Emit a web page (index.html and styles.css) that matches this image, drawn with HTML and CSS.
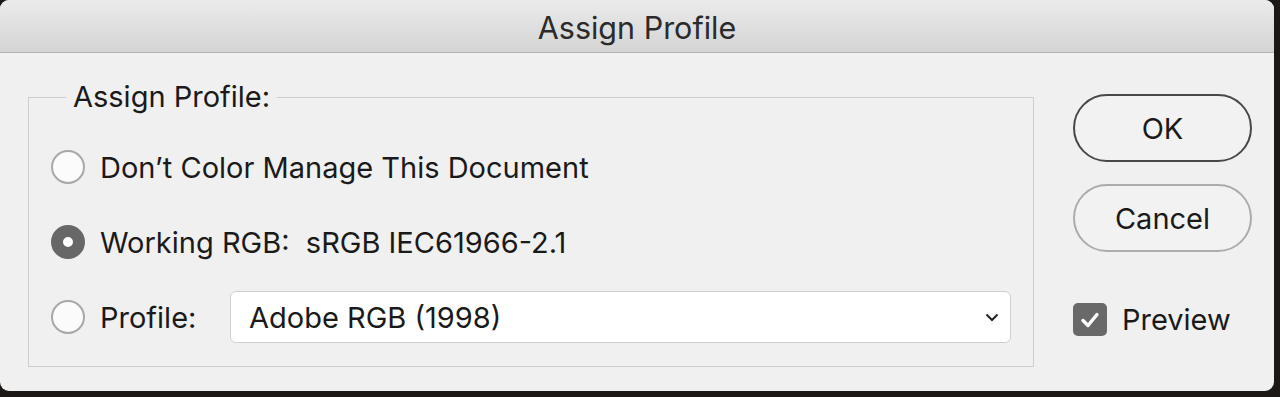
FILE: index.html
```html
<!DOCTYPE html>
<html lang="en">
<head>
    <meta charset="UTF-8">
    <title>Assign Profile</title>
    <link rel="stylesheet" href="styles.css">
</head>
<body>
    <div class="window">
        <div class="titlebar">Assign Profile</div>
        <div class="content">
            <fieldset class="group">
                <legend>Assign Profile:</legend>
                <label class="row">
                    <span class="radio"></span>
                    <span class="row-text">Don’t Color Manage This Document</span>
                </label>
                <label class="row">
                    <span class="radio checked"></span>
                    <span class="row-text">Working RGB:&nbsp; sRGB IEC61966-2.1</span>
                </label>
                <div class="row">
                    <span class="radio"></span>
                    <span class="row-text profile-label">Profile:</span>
                    <div class="select">
                        <span>Adobe RGB (1998)</span>
                        <!-- chevron -->
                        <svg width="14" height="9" viewBox="0 0 14 9">
                            <path d="M1.5 1.5 L7 7 L12.5 1.5" fill="none" stroke="#222" stroke-width="2" />
                        </svg>
                    </div>
                </div>
            </fieldset>
            <div class="side">
                <button class="btn btn-default">OK</button>
                <button class="btn">Cancel</button>
                <label class="preview">
                    <span class="checkbox">
                        <svg width="20" height="18" viewBox="0 0 20 18">
                            <path d="M3 9.5 L8 14.5 L17 3.5" fill="none" stroke="#fff" stroke-width="3.4" stroke-linecap="round" stroke-linejoin="round" />
                        </svg>
                    </span>
                    <span class="row-text">Preview</span>
                </label>
            </div>
        </div>
    </div>
</body>
</html>
```

FILE: styles.css
```css
body {
    margin: 0;
    background-color: #1c1815;
    font-family: Inter, "Liberation Sans", Arial, sans-serif;
    color: #1a1a1a;
    height: 397px;
    overflow: hidden;
}
.window {
    width: 1274px;
    height: 391px;
    background-color: #f0f0f0;
    border-radius: 9px;
    overflow: hidden;
}
.titlebar {
    height: 52px;
    line-height: 56px;
    text-align: center;
    font-size: 30.5px;
    color: #2b2b2b;
    background: linear-gradient(#ebebeb, #d4d4d4);
    border-bottom: 1px solid #b3b3b3;
}
.content {
    display: flex;
    align-items: flex-start;
    padding: 0 22px 0 28px;
}
.group {
    margin: 27px 0 0 0;
    width: 1006px;
    box-sizing: border-box;
    border: 1px solid #cdcdcd;
    padding: 27px 22px 23px 22px;
    display: flex;
    flex-direction: column;
    gap: 23px;
}
.group legend {
    margin-left: 15px;
    padding: 0 7px;
    font-size: 29px;
    line-height: 34px;
}
.row {
    display: flex;
    align-items: center;
    height: 52px;
}
.row-text {
    font-size: 29px;
}
.radio {
    width: 30px;
    height: 30px;
    border: 2px solid #a8a8a8;
    border-radius: 50%;
    background-color: #fbfbfb;
    margin-right: 15px;
    flex-shrink: 0;
}
.radio.checked {
    background-color: #fff;
    border: 12px solid #676767;
    width: 10px;
    height: 10px;
}
.profile-label {
    width: 130px;
}
.select {
    flex: 1;
    height: 50px;
    background-color: #fff;
    border: 1px solid #cfcfcf;
    border-radius: 6px;
    display: flex;
    align-items: center;
    justify-content: space-between;
    padding: 0 11px 0 18px;
    font-size: 29px;
}
.side {
    margin: 41px 0 0 39px;
    width: 179px;
    display: flex;
    flex-direction: column;
    gap: 22px;
}
.btn {
    height: 68px;
    border: 2px solid #acacac;
    border-radius: 34px;
    background-color: #f2f2f2;
    font-family: inherit;
    font-size: 29px;
    color: #1a1a1a;
}
.btn-default {
    border-color: #484848;
}
.preview {
    display: flex;
    align-items: center;
    margin-top: 28px;
}
.checkbox {
    width: 34px;
    height: 33px;
    border-radius: 5px;
    background-color: #696969;
    display: flex;
    align-items: center;
    justify-content: center;
    margin-right: 15px;
}
```
